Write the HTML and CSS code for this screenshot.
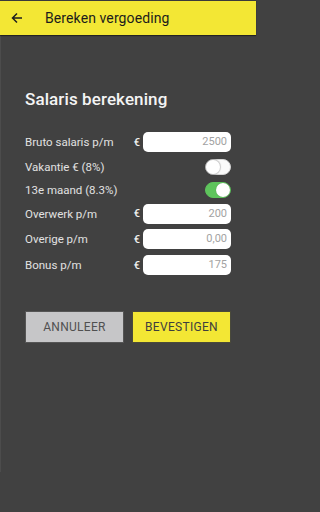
FILE: index.html
```html
<!DOCTYPE html>
<html lang="nl">
<head>
<meta charset="utf-8">
<meta name="viewport" content="width=256">
<title>Bereken vergoeding</title>
<link rel="stylesheet" href="styles.css">
</head>
<body>
<div class="screen">
<header class="appbar">
  <svg class="back" width="12" height="12" viewBox="0 0 12 12" aria-hidden="true">
    <path d="M11 6H1.8M6 1.5L1.5 6L6 10.5" fill="none" stroke="#1f1f1f" stroke-width="1.5"/>
  </svg>
  <span class="appbar-title">Bereken vergoeding</span>
</header>
<main class="page">
  <h1 class="heading">Salaris berekening</h1>
  <div class="rows">
    <div class="row row-input">
      <span class="label">Bruto salaris p/m</span>
      <span class="euro">€</span><span class="field">2500</span>
    </div>
    <div class="row row-toggle1">
      <span class="label">Vakantie € (8%)</span>
      <span class="toggle"><span class="knob"></span></span>
    </div>
    <div class="row row-toggle2">
      <span class="label">13e maand (8.3%)</span>
      <span class="toggle on"><span class="knob"></span></span>
    </div>
    <div class="row row-input2">
      <span class="label">Overwerk p/m</span>
      <span class="euro">€</span><span class="field">200</span>
    </div>
    <div class="row row-input">
      <span class="label">Overige p/m</span>
      <span class="euro">€</span><span class="field">0,00</span>
    </div>
    <div class="row row-input">
      <span class="label">Bonus p/m</span>
      <span class="euro">€</span><span class="field">175</span>
    </div>
  </div>
  <div class="actions">
    <button class="btn btn-cancel">ANNULEER</button>
    <button class="btn btn-confirm">BEVESTIGEN</button>
  </div>
</main>
</div>
</body>
</html>
```
FILE: styles.css
```css
html, body {
  margin: 0;
  padding: 0;
  background: #414141;
  font-family: Roboto, "Noto Sans", "DejaVu Sans", sans-serif;
}
.screen {
  width: 256px;
  min-height: 512px;
  background: #414141;
}
.appbar {
  height: 34px;
  border-top: 1px solid #3a3a3a;
  background: #f3e734;
  display: flex;
  align-items: center;
  box-shadow: 0 1px 1px rgba(0,0,0,0.45);
  position: relative;
}
.back {
  margin-left: 11px;
  flex: none;
}
.appbar-title {
  margin-left: 22px;
  font-size: 14px;
  color: #1c1c1c;
  letter-spacing: 0.1px;
}
.page {
  border-left: 1px solid #4c4c4c;
  min-height: 437px;
  box-sizing: border-box;
  padding: 54px 25px 0 24px;
}
.heading {
  margin: 0;
  font-size: 17px;
  line-height: 20px;
  font-weight: 500;
  color: #f4f4f4;
  letter-spacing: 0.1px;
}
.rows {
  margin-top: 20px;
}
.row {
  display: flex;
  align-items: center;
  color: #e2e2e2;
  font-size: 11.5px;
}
.row-input { height: 26px; }
.row-input2 { height: 25px; }
.row-toggle1 { height: 24px; }
.row-toggle2 { height: 22px; }
.label {
  flex: 1;
}
.euro {
  font-size: 11px;
  font-weight: 500;
  color: #f0f0f0;
  margin-right: 3px;
}
.field {
  width: 88px;
  height: 20px;
  box-sizing: border-box;
  background: #fff;
  border-radius: 5px;
  color: #a2a2a2;
  font-size: 11px;
  text-align: right;
  padding-right: 4px;
  line-height: 20px;
}
.toggle {
  width: 26px;
  height: 16px;
  box-sizing: border-box;
  border-radius: 8px;
  background: #fafafa;
  border: 1px solid #d4d4d4;
  position: relative;
}
.knob {
  position: absolute;
  top: 0;
  left: 0;
  width: 14px;
  height: 14px;
  border-radius: 50%;
  background: #fff;
  box-shadow: 0 0 1px 1px rgba(0,0,0,0.2);
}
.toggle.on {
  background: #5ec45c;
  border-color: #5ec45c;
}
.toggle.on .knob {
  left: auto;
  right: 0;
  box-shadow: 0 0 1px rgba(0,0,0,0.3);
}
.actions {
  margin-top: 33px;
  display: flex;
  gap: 8px;
}
.btn {
  width: 99px;
  height: 32px;
  box-sizing: border-box;
  font-family: Roboto, "Noto Sans", sans-serif;
  font-size: 12px;
  letter-spacing: 0.3px;
  border: 1px solid #555;
  padding: 0;
  border-radius: 0;
}
.btn-cancel {
  background: #c6c6c8;
  color: #505050;
}
.btn-confirm {
  background: #f3e734;
  color: #3e3e3e;
  border-color: #4a4a3a;
}
```
